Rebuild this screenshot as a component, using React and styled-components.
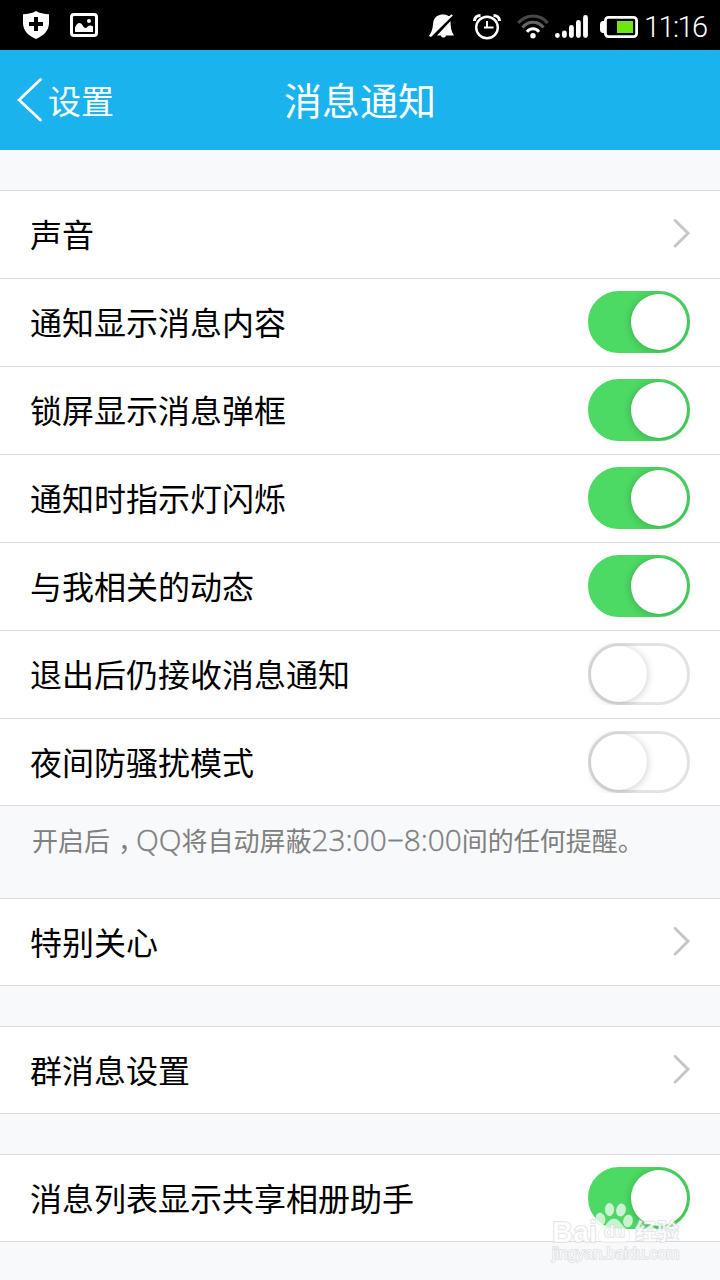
import React, { useState } from 'react';
import styled, { createGlobalStyle } from 'styled-components';

const MAIN_ROWS = [
  { id: 'sound', label: '声音', type: 'link' },
  { id: 'content', label: '通知显示消息内容', type: 'switch' },
  { id: 'popup', label: '锁屏显示消息弹框', type: 'switch' },
  { id: 'light', label: '通知时指示灯闪烁', type: 'switch' },
  { id: 'feed', label: '与我相关的动态', type: 'switch' },
  { id: 'background', label: '退出后仍接收消息通知', type: 'switch' },
  { id: 'night', label: '夜间防骚扰模式', type: 'switch' },
];

const CARE_ROWS = [{ id: 'care', label: '特别关心', type: 'link' }];
const GROUP_ROWS = [{ id: 'group', label: '群消息设置', type: 'link' }];
const ALBUM_ROWS = [
  { id: 'album', label: '消息列表显示共享相册助手', type: 'switch' },
];

function ShieldIcon() {
  return (
    <svg width="26" height="28" viewBox="0 0 26 28">
      <path
        d="M13 0C9.5 2.2 5 3 0 3.2V12c0 8 6 13 13 16 7-3 13-8 13-16V3.2C21 3 16.5 2.2 13 0z"
        fill="#fff"
      />
      <path d="M13 6v14M6 13h14" stroke="#000" strokeWidth="4" />
    </svg>
  );
}

function PictureIcon() {
  return (
    <svg width="28" height="24" viewBox="0 0 28 24">
      <rect x="1.5" y="1.5" width="25" height="21" rx="2.5" fill="none" stroke="#fff" strokeWidth="3" />
      <path d="M5 19v-4.5c2.5-6 6-5.5 8-1.5 1.5 2.5 3 2.5 4.5.8 2-1.800 4-1.300 5.500-.3v5.500z" fill="#fff" />
      <circle cx="19" cy="8" r="2" fill="#fff" />
    </svg>
  );
}

function MuteIcon() {
  return (
    <svg width="26" height="26" viewBox="0 0 26 26">
      <path d="M19.500 2C14-1 6.500 .5 4.500 7c-.8 4-.3 7-2.500 11.500L0 22l2 1L23.800 1.500l-1.200-1.200L20.500 2z" fill="#fff" />
      <path d="M21.500 7L8 21.500h4c.5 2.800 4.500 2.800 5 0h8c-3-4-3.500-9-3.500-14.500z" fill="#fff" />
    </svg>
  );
}

function AlarmIcon() {
  return (
    <svg width="28" height="26" viewBox="0 0 28 26" fill="none" stroke="#fff">
      <circle cx="14" cy="13.500" r="10.800" strokeWidth="2.400" />
      <path d="M14 7v7.500M11 13.500h9.500" strokeWidth="2" />
      <path d="M1.500 7C1.500 3.500 4 1.500 7.500 1.500M26.500 7c0-3.500-2.500-5.500-6-5.500" strokeWidth="3" />
    </svg>
  );
}

function WifiIcon() {
  return (
    <svg width="32" height="25" viewBox="0 0 32 25" fill="none" strokeWidth="3">
      <path d="M1.200 9C9 -.5 23 -.5 30.800 9" stroke="#484848" />
      <path d="M5.500 13.500c5.500-7 15.500-7 21 0" stroke="#666" />
      <path d="M10 17.800c3-4 9-4 12 0" stroke="#fff" />
      <circle cx="16" cy="21.700" r="2.700" fill="#fff" />
    </svg>
  );
}

function SignalIcon() {
  return (
    <svg width="33" height="23" viewBox="0 0 33 23" stroke="#fff" strokeWidth="4.800" strokeLinecap="round">
      <path d="M2.400 20.500v.1M9.400 17.800v2.800M16.400 12.500v8.100M23.400 7.400v13.200M30.500 2.400v18.200" />
    </svg>
  );
}

function BatteryIcon() {
  return (
    <svg width="38" height="22" viewBox="0 0 38 22">
      <rect x="5.400" y="1.400" width="31.200" height="19.200" rx="3" fill="none" stroke="#fff" strokeWidth="2.800" />
      <path d="M5 5H2.500Q0 5.500 0 8v6q0 2.500 2.500 3H5z" fill="#fff" />
      <rect x="17" y="5" width="16" height="12" fill="#6ee514" />
    </svg>
  );
}

function BackArrow() {
  return (
    <svg width="26" height="44" viewBox="0 0 26 44">
      <path d="M23.500 1.500L2 22l21.500 20" fill="none" stroke="#fff" strokeWidth="2.800" strokeLinecap="round" />
    </svg>
  );
}

function RowArrow() {
  return (
    <svg width="18" height="30" viewBox="0 0 18 30">
      <path
        d="M3.200 1.500L16 14.200 3.200 27"
        fill="none"
        stroke="#c7c7c7"
        strokeWidth="3"
        strokeLinecap="round"
      />
    </svg>
  );
}

function PawIcon() {
  return (
    <svg width="38" height="42" viewBox="0 0 38 42">
      <g fill="#fff" fillOpacity="0.7" stroke="#d5d7d9" strokeOpacity="0.6">
        <ellipse cx="5.500" cy="17" rx="4.500" ry="6" transform="rotate(-15 5.500 17)" />
        <ellipse cx="14.500" cy="7.500" rx="4.300" ry="6.300" />
        <ellipse cx="26" cy="8" rx="4.500" ry="6.200" transform="rotate(12 26 8)" />
        <ellipse cx="33" cy="19" rx="4.500" ry="6" transform="rotate(10 33 19)" />
        <path d="M19 17c-5 0-6.500 5-10.500 8.500C3.500 29.500 2 33 4 37c2.500 5 9 3 15 3s12.500 2 15-3c2-4 .5-7.500-4.500-11.500C25.500 22 24 17 19 17z" />
      </g>
    </svg>
  );
}

function RowGroup({ rows, checked, onToggle }) {
  return (
    <Group>
      {rows.map(row => (
        <Row key={row.id}>
          <RowLabel>{row.label}</RowLabel>
          {row.type === 'link' ? (
            <RowArrow />
          ) : (
            <Toggle
              role="switch"
              aria-checked={!!checked[row.id]}
              aria-label={row.label}
              onClick={() => onToggle(row.id)}
            >
              <Track $on={checked[row.id]}>
                <Knob />
              </Track>
            </Toggle>
          )}
        </Row>
      ))}
    </Group>
  );
}

function App() {
  const [checked, setChecked] = useState({
    content: true,
    popup: true,
    light: true,
    feed: true,
    background: false,
    night: false,
    album: true,
  });

  function onToggle(id) {
    setChecked(prev => ({ ...prev, [id]: !prev[id] }));
  }

  return (
    <>
      <GlobalStyle />
      <Screen>
        <StatusBar>
          <StatusLeft>
            <ShieldIcon />
            <PictureIcon />
          </StatusLeft>
          <StatusRight>
            <MuteIcon />
            <AlarmIcon />
            <WifiIcon />
            <SignalIcon />
            <BatteryIcon />
            <Clock>11:16</Clock>
          </StatusRight>
        </StatusBar>
        <Header>
          <BackButton>
            <BackArrow />
            <BackLabel>设置</BackLabel>
          </BackButton>
          <Title>消息通知</Title>
        </Header>
        <RowGroup rows={MAIN_ROWS} checked={checked} onToggle={onToggle} />
        <Hint>
          开启后<Comma>，</Comma>
          <Latin>QQ</Latin>将自动屏蔽<Latin>23:00−8:00</Latin>间的任何提醒。
        </Hint>
        <RowGroup rows={CARE_ROWS} checked={checked} onToggle={onToggle} />
        <RowGroup rows={GROUP_ROWS} checked={checked} onToggle={onToggle} />
        <RowGroup rows={ALBUM_ROWS} checked={checked} onToggle={onToggle} />
        <Watermark>
          <Brand>
            <BrandText>Bai</BrandText>
            <Paw>
              <PawIcon />
              <PawText>du</PawText>
            </Paw>
            <BrandChinese>经验</BrandChinese>
          </Brand>
          <Site>jingyan.baidu.com</Site>
        </Watermark>
      </Screen>
    </>
  );
}

const GlobalStyle = createGlobalStyle`
  * {
    box-sizing: border-box;
  }

  body {
    margin: 0;
    background: #f8f9fb;
    font-family: 'Noto Sans CJK SC', sans-serif;
  }

  svg {
    display: block;
    flex-shrink: 0;
  }

  button {
    border: 0;
    padding: 0;
    background: none;
    font: inherit;
    color: inherit;
    cursor: pointer;
  }
`;

const Screen = styled.div`
  position: relative;
  width: 720px;
  height: 1280px;
  overflow: hidden;
  background: #f8f9fb;
`;

const StatusBar = styled.div`
  display: flex;
  justify-content: space-between;
  height: 50px;
  padding: 0 12px 0 23px;
  background: #000;
`;

const StatusLeft = styled.div`
  display: flex;
  align-items: center;
  gap: 21px;
`;

const StatusRight = styled.div`
  display: flex;
  align-items: center;
  padding-top: 3px;

  & > svg:nth-child(1) {
    margin-right: 18px;
  }

  & > svg:nth-child(2) {
    margin-right: 16px;
  }

  & > svg:nth-child(3) {
    margin-right: 6px;
  }

  & > svg:nth-child(4) {
    margin-right: 12px;
  }
`;

const Clock = styled.span`
  width: 64px;
  margin-left: 6px;
  font-family: Roboto, sans-serif;
  font-weight: 300;
  font-size: 29px;
  line-height: 40px;
  letter-spacing: -1.6px;
  color: #fff;
  white-space: nowrap;
`;

const Header = styled.header`
  display: grid;
  grid-template-columns: 1fr auto 1fr;
  align-items: center;
  height: 100px;
  margin-bottom: 40px;
  padding: 0 17px;
  background: #1ab3ee;
  color: #fff;
`;

const BackButton = styled.button`
  display: flex;
  align-items: center;
  gap: 5px;
`;

const BackLabel = styled.span`
  padding-bottom: 1px;
  font-size: 33px;
  line-height: 48px;
`;

const Title = styled.h1`
  margin: 0;
  padding-bottom: 2px;
  font-weight: 400;
  font-size: 38px;
  line-height: 56px;
`;

const Group = styled.section`
  margin-bottom: 40px;
`;

const Row = styled.div`
  display: flex;
  justify-content: space-between;
  align-items: center;
  height: 88px;
  padding: 0 30px 1px;
  border-top: 1px solid #dcdde0;
  background: #fff;

  &:last-child {
    padding-bottom: 0;
    border-bottom: 1px solid #dcdde0;
  }
`;

const RowLabel = styled.span`
  padding-bottom: 2px;
  font-size: 32px;
  line-height: 48px;
  color: #000;
`;

const Toggle = styled.button`
  width: 102px;
  height: 62px;
  overflow: hidden;
`;

const Track = styled.span`
  display: flex;
  justify-content: ${({ $on }) => ($on ? 'flex-end' : 'flex-start')};
  align-items: center;
  width: 102px;
  height: 62px;
  border: 3px solid ${({ $on }) => ($on ? '#4cd964' : '#e3e3e3')};
  border-radius: 31px;
  background: ${({ $on }) => ($on ? '#4cd964' : '#fff')};
`;

const Knob = styled.span`
  width: 56px;
  height: 56px;
  border-radius: 50%;
  background: #fff;
  box-shadow: 0 1px 8px rgba(0, 0, 0, 0.22);
`;

const Hint = styled.p`
  height: 92px;
  margin: -40px 0 0;
  padding: 14px 32px 0;
  font-size: 26px;
  line-height: 40px;
  color: #808080;
  white-space: nowrap;
`;

const Comma = styled.span`
  margin: 0 5px 0 8px;
  font-feature-settings: 'halt';
`;

const Latin = styled.span`
  font-family: 'Open Sans', sans-serif;
  font-weight: 300;
  font-size: 29.8px;
  line-height: 1;
  -webkit-text-stroke: 0.4px #808080;
`;

const Watermark = styled.div`
  position: absolute;
  left: 552px;
  top: 1202px;
  width: 130px;
  font-family: 'Liberation Sans', 'Noto Sans CJK SC', sans-serif;
  color: rgba(255, 255, 255, 0.8);
  -webkit-text-stroke: 1.6px rgba(205, 207, 210, 0.6);
  paint-order: stroke fill;
`;

const Brand = styled.div`
  display: flex;
  align-items: flex-end;
  height: 42px;
`;

const BrandText = styled.span`
  width: 43px;
  font-weight: 700;
  font-size: 29px;
  line-height: 23px;
`;

const Paw = styled.span`
  position: relative;
`;

const PawText = styled.span`
  position: absolute;
  left: 9px;
  bottom: 3px;
  font-weight: 700;
  font-size: 17px;
  line-height: 18px;
`;

const BrandChinese = styled.span`
  margin-left: 2px;
  font-weight: 700;
  font-size: 22px;
  line-height: 25px;
`;

const Site = styled.div`
  font-size: 15.8px;
  line-height: 20px;
`;

export default App;
